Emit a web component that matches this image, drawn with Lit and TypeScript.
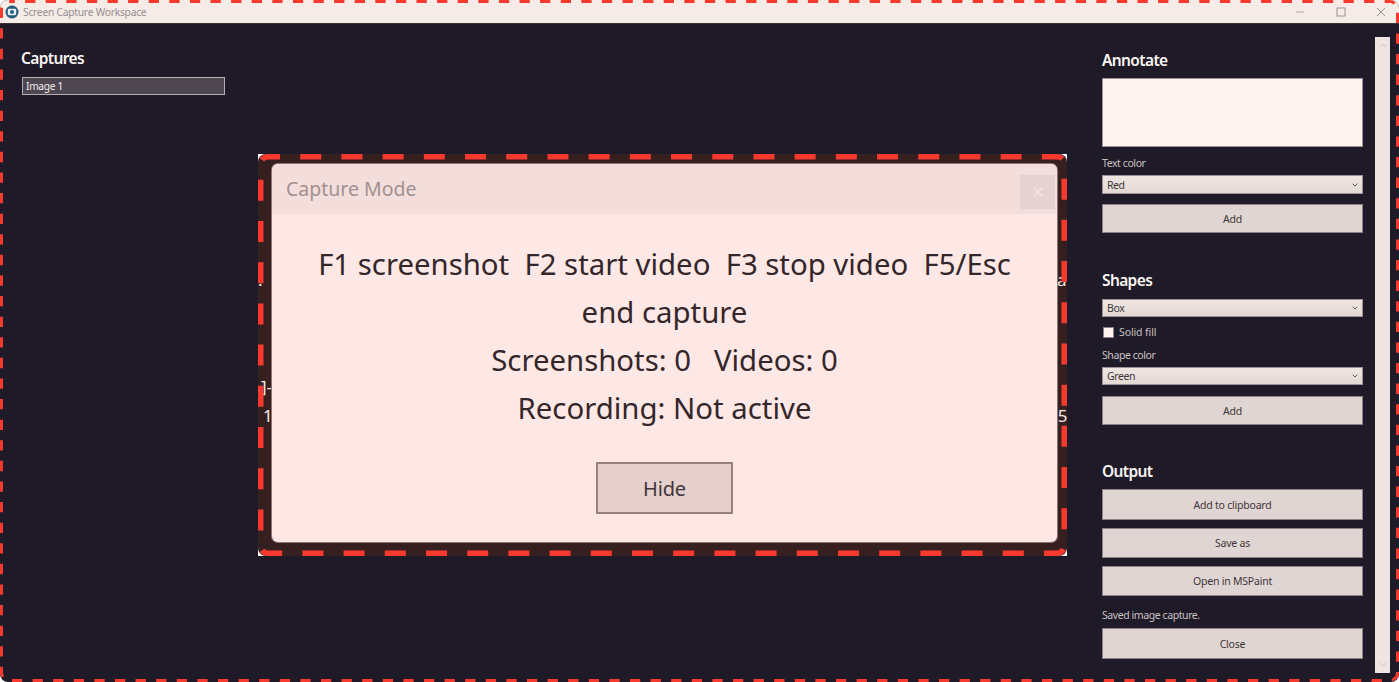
import { LitElement, html, css, svg } from "lit";
import { customElement } from "lit/decorators.js";

const chevron = html`<svg class="chev" viewBox="0 0 6 4" width="6" height="4"><path d="M.7 .7l2.3 2.3 2.3-2.3" fill="none" stroke="#5c5458" stroke-width="1"/></svg>`;

@customElement("app-root")
export class AppRoot extends LitElement {
  static styles = css`
    :host { display: block; width: 1399px; height: 682px; position: relative; overflow: hidden; background: #fff;
      font-family: "Noto Sans", "Open Sans", sans-serif; }
    .window { width: 1399px; height: 682px; display: flex; flex-direction: column; border-radius: 8px; overflow: hidden; background: #1f1a27; }
    .titlebar { height: 24px; flex: none; display: flex; align-items: center; background: #f5ebe7; border-bottom: 1px solid #3a3238; box-sizing: border-box; padding-left: 5px; }
    .titlebar .app-icon { flex: none; }
    .titlebar .name { margin-left: 4px; font-size: 10.2px; color: #968d90; letter-spacing: -0.02em; flex: 1; }
    .winbtn { width: 40.5px; display: flex; justify-content: center; align-items: center; }
    .winbtns { display: flex; margin-right: -2.25px; }
    .body { flex: 1; display: flex; min-height: 0; }
    .left { width: 232px; flex: none; box-sizing: border-box; padding: 22px 7px 0 21px; }
    h2 { margin: 0; font-size: 15.5px; line-height: 24px; font-weight: 600; color: #fbf6f3; letter-spacing: -0.04em; }
    .item { margin: 7px 0 0 1px; height: 18px; box-sizing: border-box; border: 1px solid #b5adb0; background: #4e4752; color: #f2ecea; font-size: 10.2px; line-height: 16px; padding-left: 3px; letter-spacing: -0.03em; }
    .center { flex: 1; display: flex; justify-content: center; align-items: center; padding-top: 4px; }
    .shot { position: relative; width: 809px; height: 402px; box-sizing: border-box; background: #fff; overflow: hidden; }
    .shot-bg { position: relative; width: 100%; height: 100%; box-sizing: border-box; border-radius: 8px; background: #36201f; padding: 10px 10px 14px 14px; display: flex; }
    .dash { position: absolute; left: 0; top: 0; pointer-events: none; z-index: 2; }
    .dialog { position: relative; z-index: 1; flex: 1; display: flex; flex-direction: column; border-radius: 6px; background: #fee8e5; box-shadow: 0 0 0 1px #8f7472; color: #33262a; }
    .dlg-head { height: 50px; flex: none; display: flex; justify-content: space-between; background: #f3dedb; border-radius: 6px 6px 0 0; box-sizing: border-box; padding: 11px 2px 0 14px; }
    .dlg-title { font-size: 19.5px; line-height: 27px; color: #a39090; }
    .dlg-x { width: 35px; height: 34px; background: #e6d3d1; display: flex; align-items: center; justify-content: center; }
    .dlg-text { margin: 26px 40px 0; text-align: center; font-size: 29.35px; line-height: 48px; white-space: pre-wrap; }
    .hide { margin: 30px auto 0; width: 137px; height: 52px; box-sizing: border-box; border: 2px solid #9c8080; background: #e5d0cd; color: #43353a; font: inherit; font-size: 20px; letter-spacing: -0.01em; padding: 0; }
    .sliver { position: absolute; color: #f3ece8; font-size: 17px; line-height: 20px; }
    .s1 { left: 0; top: 116px; }
    .s2 { left: 3px; top: 223px; }
    .s3 { left: 5px; top: 252px; }
    .s4 { left: 799px; top: 116px; }
    .s5 { left: 790px; top: 252px; }
    .right { width: 261px; flex: none; margin-left: 9px; display: flex; flex-direction: column; padding-top: 24px; }
    .annot { margin-top: 6px; height: 69px; box-sizing: border-box; background: #fef3f0; border: 1px solid #9a8f92; }
    .label { margin-top: 8px; height: 16px; font-size: 10.5px; line-height: 16px; color: #c9c1c1; letter-spacing: -0.04em; }
    .select { margin-top: 4px; height: 19px; box-sizing: border-box; display: flex; justify-content: space-between; align-items: center; padding: 0 4px; background: linear-gradient(#efe6e2, #e2d8d4); border: 1px solid #9c9195; color: #3f3639; font-size: 10.5px; letter-spacing: -0.04em; }
    .btn { margin-top: 6px; height: 31px; box-sizing: border-box; background: #dfd5d3; border: 1px solid #8c8285; color: #3f3639; font: inherit; font-size: 10.5px; letter-spacing: -0.02em; padding: 0; display: block; width: 100%; }
    .check { margin-top: 7px; height: 16px; display: flex; align-items: center; gap: 5px; padding-left: 1px; font-size: 10.5px; color: #c9c1c1; letter-spacing: -0.01em; }
    .box { width: 11px; height: 11px; background: #fef3f0; border: 1px solid #8c8285; box-sizing: border-box; }
    .h-gap { margin-top: 35px; }
    .h-gap2 { margin-top: 34px; }
    .m7 { margin-top: 7px; }
    .m11 { margin-top: 11px; }
    .m10 { margin-top: 10px; }
    .m8 { margin-top: 8px; }
    .m5 { margin-top: 5px; }
    .h18 { height: 18px; }
    .h29 { height: 29px; }
    .h30 { height: 30px; }
    .scroll { width: 15px; flex: none; margin: 13px 9px 9px 12px; background: #efe4e1; display: flex; flex-direction: column; justify-content: space-between; align-items: center; padding: 6px 0; box-sizing: border-box; }
  `;

  render() {
    return html`
      <div class="window">
        <div class="titlebar">
          <svg class="app-icon" width="14" height="14" viewBox="0 0 14 14">
            <circle cx="7" cy="7" r="6.5" fill="#255a78"/>
            <rect x="2.8" y="3.8" width="8.4" height="6.4" rx="1.4" fill="#e8f0f4"/>
            <circle cx="7" cy="7" r="2" fill="#1f5f90"/>
          </svg>
          <span class="name">Screen Capture Workspace</span>
          <div class="winbtns">
            <div class="winbtn"><svg width="10" height="10" viewBox="0 0 10 10"><path d="M1 5h8" stroke="#b0a7a7" stroke-width="1" fill="none"/></svg></div>
            <div class="winbtn"><svg width="10" height="10" viewBox="0 0 10 10"><rect x="1" y="1" width="8" height="8" fill="none" stroke="#9a9191" stroke-width="1"/></svg></div>
            <div class="winbtn"><svg width="10" height="10" viewBox="0 0 10 10"><path d="M1 1l8 8M9 1l-8 8" stroke="#9a9191" stroke-width="1" fill="none"/></svg></div>
          </div>
        </div>
        <div class="body">
          <div class="left">
            <h2>Captures</h2>
            <div class="item">Image 1</div>
          </div>
          <div class="center">
            <div class="shot">
              <div class="shot-bg">
                <span class="sliver s1">:</span>
                <span class="sliver s2">]-</span>
                <span class="sliver s3">1</span>
                <span class="sliver s4">a</span>
                <span class="sliver s5">25</span>
                <div class="dialog">
                  <div class="dlg-head">
                    <span class="dlg-title">Capture Mode</span>
                    <div class="dlg-x"><svg width="10" height="10" viewBox="0 0 10 10"><path d="M1 1l8 8M9 1l-8 8" stroke="#f3e8e6" stroke-width="1.3" fill="none"/></svg></div>
                  </div>
                  <div class="dlg-text">F1 screenshot  F2 start video  F3 stop video  F5/Esc end capture
Screenshots: 0   Videos: 0
Recording: Not active</div>
                  <button class="hide">Hide</button>
                </div>
              </div>
              <svg class="dash" width="809" height="402" viewBox="0 0 809 402">
                ${svg`<rect x="2.75" y="2.75" width="803.5" height="396.5" rx="7" fill="none" stroke="#f83a2e" stroke-width="5.5" stroke-dasharray="21 20.2" stroke-dashoffset="8.7"/>`}
              </svg>
            </div>
          </div>
          <div class="right">
            <h2>Annotate</h2>
            <div class="annot"></div>
            <div class="label">Text color</div>
            <div class="select"><span>Red</span>${chevron}</div>
            <button class="btn m10 h29">Add</button>
            <h2 class="h-gap">Shapes</h2>
            <div class="select m7 h18"><span>Box</span>${chevron}</div>
            <div class="check"><span class="box"></span><span>Solid fill</span></div>
            <div class="label m7">Shape color</div>
            <div class="select h18"><span>Green</span>${chevron}</div>
            <button class="btn m11 h29">Add</button>
            <h2 class="h-gap2">Output</h2>
            <button class="btn">Add to clipboard</button>
            <button class="btn m8 h30">Save as</button>
            <button class="btn m8 h30">Open in MSPaint</button>
            <div class="label m11">Saved image capture.</div>
            <button class="btn m5">Close</button>
          </div>
          <div class="scroll">
            <svg width="8" height="5" viewBox="0 0 8 5"><path d="M1 4l3-3 3 3" fill="none" stroke="#cfc4c2" stroke-width="1"/></svg>
            <svg width="8" height="5" viewBox="0 0 8 5"><path d="M1 1l3 3 3-3" fill="none" stroke="#cfc4c2" stroke-width="1"/></svg>
          </div>
        </div>
      </div>
      <svg class="dash" width="1399" height="682" viewBox="0 0 1399 682">
        ${svg`<rect x="1.5" y="1.5" width="1396" height="679" rx="8" fill="none" stroke="#f83a2e" stroke-width="3" stroke-dasharray="10.3 10.3" stroke-dashoffset="5"/>`}
      </svg>
    `;
  }
}
